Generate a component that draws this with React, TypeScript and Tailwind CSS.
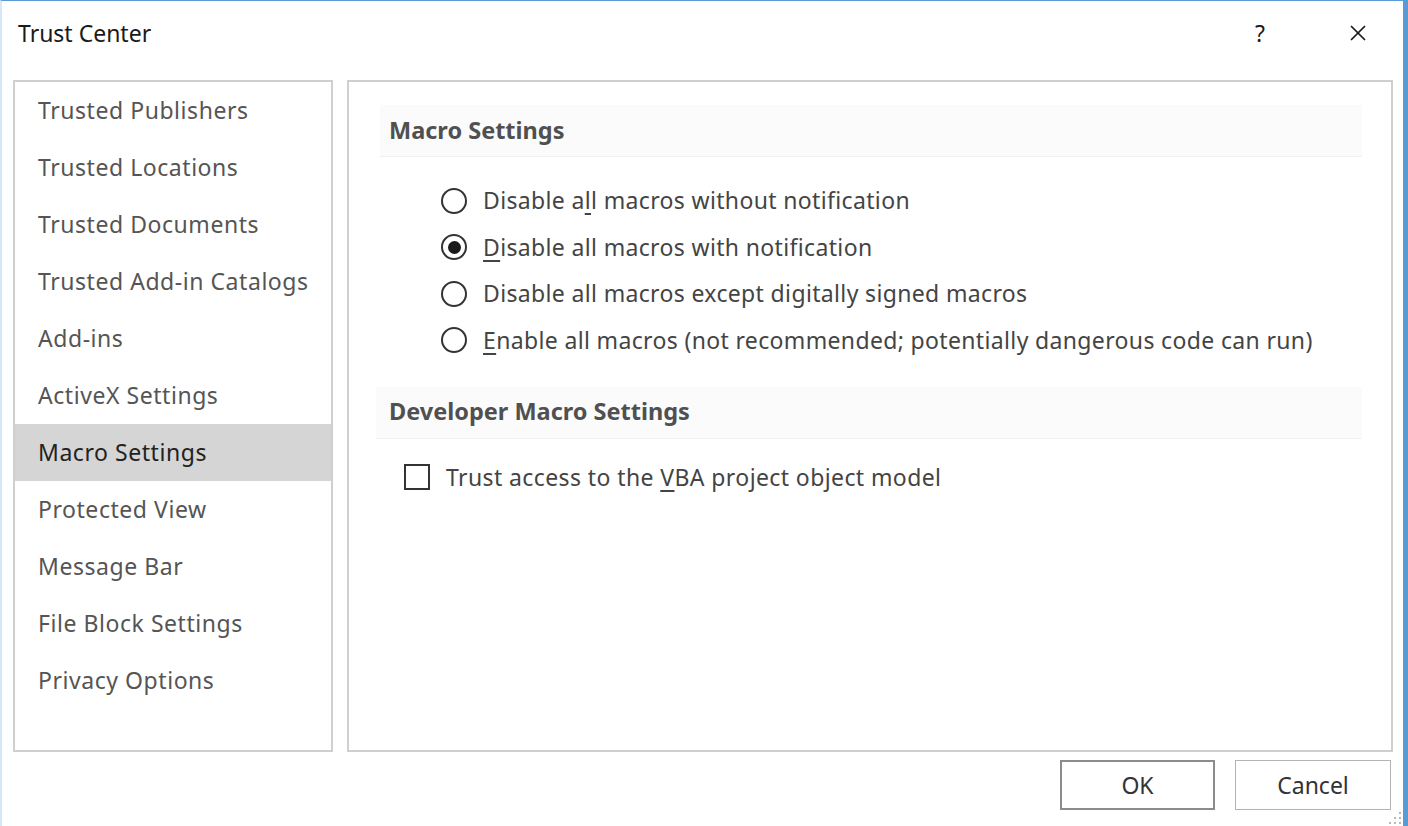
import { X } from "lucide-react";

const navItems = [
  "Trusted Publishers",
  "Trusted Locations",
  "Trusted Documents",
  "Trusted Add-in Catalogs",
  "Add-ins",
  "ActiveX Settings",
  "Macro Settings",
  "Protected View",
  "Message Bar",
  "File Block Settings",
  "Privacy Options",
];

function Radio({ checked }: { checked?: boolean }) {
  return (
    <span className="w-[26px] h-[26px] rounded-full border-2 border-[#333] bg-white flex items-center justify-center shrink-0">
      {checked && <span className="w-[13px] h-[13px] rounded-full bg-[#1a1a1a]" />}
    </span>
  );
}

function SectionHeading({ children, indent = 9 }: { children: React.ReactNode; indent?: number }) {
  return (
    <div
      className="h-[52px] flex items-center bg-[#fbfbfb] border-b border-[#f0f0f0] font-bold text-[23.5px] tracking-[0px] text-[#505050]"
      style={{ paddingLeft: indent }}
    >
      {children}
    </div>
  );
}

export default function App() {
  const macroOptions = [
    { pre: "Disable a", u: "l", post: "l macros without notification" },
    { pre: "", u: "D", post: "isable all macros with notification", checked: true },
    { pre: "Disable all macros except di", u: "g", post: "itally signed macros", noUnderline: true },
    { pre: "", u: "E", post: "nable all macros (not recommended; potentially dangerous code can run)" },
  ];

  return (
    <div
      className="w-[1408px] h-[826px] bg-white border-t border-t-[#5b9bd5] border-l-2 border-l-[#d4e8f7] border-r-[5px] border-r-[#5b9bd5] flex flex-col overflow-hidden text-[#4a4a4a]"
      style={{ fontFamily: '"Noto Sans", "Open Sans", sans-serif' }}
    >
      {/* title bar */}
      <div className="h-[64px] flex items-center pl-[16px] pr-[32px] shrink-0">
        <span className="text-[23px] text-[#1a1a1a]">Trust Center</span>
        <span className="ml-auto text-[23px] text-[#1a1a1a] mr-[80px]">?</span>
        <X size={26} strokeWidth={1.6} className="text-[#1a1a1a]" />
      </div>

      <div className="flex gap-[14px] pl-[11px] pr-[10px] h-[672px] shrink-0 mt-[15px]">
        {/* sidebar */}
        <div className="w-[320px] border-2 border-[#cfcfcf] flex flex-col">
          {navItems.map((item) => (
            <div
              key={item}
              className={
                "h-[57px] flex items-center pl-[23px] text-[23px] tracking-[0.55px] shrink-0 " +
                (item === "Macro Settings" ? "bg-[#d5d5d5] text-[#222]" : "text-[#555]")
              }
            >
              {item}
            </div>
          ))}
        </div>

        {/* content */}
        <div className="flex-1 border-2 border-[#cfcfcf] pt-[23px] pl-[31px] pr-[29px]">
          <SectionHeading>Macro Settings</SectionHeading>
          <div className="flex flex-col pl-[61px] pt-[30px] gap-[19.5px]">
            {macroOptions.map((o, i) => (
              <label key={i} className="flex items-center gap-[16px] h-[27px] text-[23px] tracking-[0.35px] text-[#444]">
                <Radio checked={o.checked} />
                <span>
                  {o.pre}
                  {o.noUnderline ? o.u : <span className="underline underline-offset-[4px]">{o.u}</span>}
                  {o.post}
                </span>
              </label>
            ))}
          </div>

          <div className="mt-[33px] -ml-[4px]">
            <SectionHeading indent={13}>Developer Macro Settings</SectionHeading>
          </div>
          <label className="flex items-center gap-[16px] mt-[21px] pl-[24px] text-[23px] tracking-[0.4px] text-[#444]">
            <span className="w-[26px] h-[26px] border-2 border-[#333] bg-white shrink-0" />
            <span>
              Trust access to the <span className="underline underline-offset-[4px]">V</span>BA project object model
            </span>
          </label>
        </div>
      </div>

      {/* footer buttons */}
      <div className="flex justify-end gap-[20px] pr-[12px] pt-[8px] relative">
        <button className="w-[155px] h-[50px] border-2 border-[#8c8c8c] bg-white text-[23px] text-[#333]">OK</button>
        <button className="w-[156px] h-[50px] border border-[#b4b4b4] bg-white text-[23px] text-[#333]">Cancel</button>
        <svg className="absolute right-[0px] bottom-[-16px]" width="16" height="16" viewBox="0 0 16 16">
          {[
            [12, 2],
            [12, 7],
            [7, 7],
            [12, 12],
            [7, 12],
            [2, 12],
          ].map(([x, y], i) => (
            <rect key={i} x={x} y={y} width="2" height="2" fill="#b8b8b8" />
          ))}
        </svg>
      </div>
    </div>
  );
}
